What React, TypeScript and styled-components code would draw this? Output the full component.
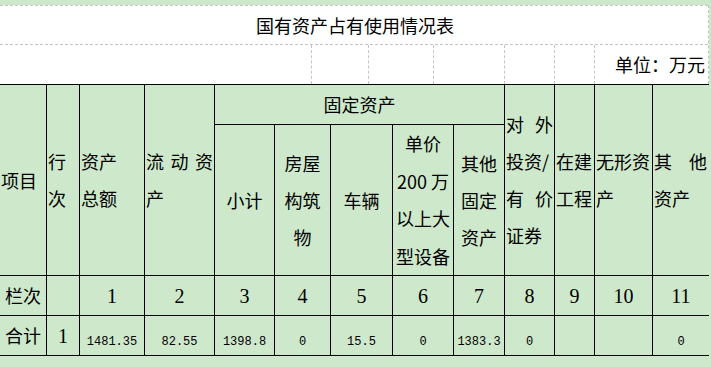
import styled, { createGlobalStyle } from 'styled-components'

const GlobalStyle = createGlobalStyle`
  html, body {
    margin: 0;
    padding: 0;
    background: #cee8cb;
  }
  body {
    font-family: "Noto Sans CJK SC", sans-serif;
    color: #000;
  }
`

const COLUMNS = '47px 33px 65px 70px 60px 56px 62px 61px 51px 50px 40px 58px 56px'
const DASH = '1px dashed #c4c4c4'

function App() {
  return (
    <Page lang="zh-CN">
      <GlobalStyle />
      <Sheet>
        <TitleRow>国有资产占有使用情况表</TitleRow>
        <UnitRow>
          <Gap $w={312} />
          <Gap $w={57} />
          <Gap $w={65} />
          <Gap $w={71} />
          <Gap $w={50} />
          <Gap $w={40} />
          <Unit>单位：万元</Unit>
        </UnitRow>
      </Sheet>

      <Table>
        <Head $rows={2}>
          <Line>项目</Line>
        </Head>
        <Head $rows={2}>
          <Line>行</Line>
          <Line>次</Line>
        </Head>
        <Head $rows={2}>
          <Line>资产</Line>
          <Line>总额</Line>
        </Head>
        <Head $rows={2} $pad={1}>
          <Line $justify>流动资</Line>
          <Line>产</Line>
        </Head>
        <Head $cols={5} $align="center">
          <Line>固定资产</Line>
        </Head>
        <Head $rows={2} $pad={1}>
          <Line $justify>对外</Line>
          <Line>投资/</Line>
          <Line $justify>有价</Line>
          <Line>证券</Line>
        </Head>
        <Head $rows={2}>
          <Line>在建</Line>
          <Line>工程</Line>
        </Head>
        <Head $rows={2}>
          <Line>无形资</Line>
          <Line>产</Line>
        </Head>
        <Head $rows={2} $last $pad={2}>
          <Line $justify>其他</Line>
          <Line>资产</Line>
        </Head>

        <Head $align="center">
          <Line>小计</Line>
        </Head>
        <Head $align="center">
          <Line>房屋</Line>
          <Line>构筑</Line>
          <Line>物</Line>
        </Head>
        <Head $align="center">
          <Line>车辆</Line>
        </Head>
        <Head $align="center" $tight>
          <Line>单价</Line>
          <Line>200 万</Line>
          <Line>以上大</Line>
          <Line>型设备</Line>
        </Head>
        <Head $align="center">
          <Line>其他</Line>
          <Line>固定</Line>
          <Line>资产</Line>
        </Head>

        <Label>栏次</Label>
        <Index />
        {Array.from({ length: 11 }, (_, i) => (
          <Index key={i} $last={i === 10}>
            {i + 1}
          </Index>
        ))}

        <Label>合计</Label>
        <Index>1</Index>
        {['1481.35', '82.55', '1398.8', '0', '15.5', '0', '1383.3', '0', '', '', '0'].map((v, i) => (
          <Amount key={i} $last={i === 10}>
            {v}
          </Amount>
        ))}
      </Table>
    </Page>
  )
}

export default App

const Page = styled.div`
  padding-top: 5px;
  height: 362px;
`

const Sheet = styled.div`
  box-sizing: border-box;
  width: 709px;
  background: #fff;
  border-right: ${DASH};
`

const TitleRow = styled.div`
  box-sizing: border-box;
  height: 39px;
  border-top: ${DASH};
  display: flex;
  align-items: center;
  justify-content: center;
  font-size: 18px;
  line-height: 20px;
  padding-left: 2px;
`

const UnitRow = styled.div`
  box-sizing: border-box;
  height: 40px;
  border-top: ${DASH};
  display: flex;
`

const Gap = styled.div<{ $w: number }>`
  box-sizing: border-box;
  width: ${(p) => p.$w}px;
  border-right: ${DASH};
`

const Unit = styled.div`
  flex: 1;
  display: flex;
  align-items: center;
  justify-content: flex-end;
  padding: 0 3px 2px 0;
  font-size: 18px;
  line-height: 20px;
`

const Table = styled.div`
  box-sizing: border-box;
  width: 709px;
  display: grid;
  grid-template-columns: ${COLUMNS};
  grid-template-rows: 40px 151px 40px 40px;
  border-top: 1px solid #000;
`

const Cell = styled.div<{ $last?: boolean }>`
  box-sizing: border-box;
  border-bottom: 1px solid #000;
  border-right: ${(p) => (p.$last ? 'none' : '1px solid #000')};
  min-width: 0;
  overflow: hidden;
  white-space: nowrap;
`

const Head = styled(Cell)<{
  $rows?: number
  $cols?: number
  $align?: 'left' | 'center'
  $pad?: number
  $tight?: boolean
}>`
  grid-row: span ${(p) => p.$rows ?? 1};
  grid-column: span ${(p) => p.$cols ?? 1};
  display: flex;
  flex-direction: column;
  justify-content: center;
  text-align: ${(p) => p.$align ?? 'left'};
  padding: 0 ${(p) => p.$pad ?? 0}px 0 ${(p) => (p.$align === 'center' ? 0 : 1)}px;
  font-size: 18px;
  line-height: ${(p) => (p.$tight ? '37.5px' : '37px')};
`

const Line = styled.div<{ $justify?: boolean }>`
  text-align-last: ${(p) => (p.$justify ? 'justify' : 'auto')};
  text-align: ${(p) => (p.$justify ? 'justify' : 'inherit')};
`

const Label = styled(Cell)`
  display: flex;
  align-items: center;
  justify-content: center;
  font-size: 18px;
  line-height: 20px;
  padding-bottom: 1px;
`

const Index = styled(Cell)`
  display: flex;
  align-items: center;
  justify-content: center;
  font-family: "Liberation Serif", serif;
  font-size: 20px;
  line-height: 22px;
`

const Amount = styled(Cell)`
  display: flex;
  align-items: flex-end;
  justify-content: center;
  padding-bottom: 6px;
  font-family: "Liberation Mono", monospace;
  font-size: 12px;
  line-height: 14px;
`
